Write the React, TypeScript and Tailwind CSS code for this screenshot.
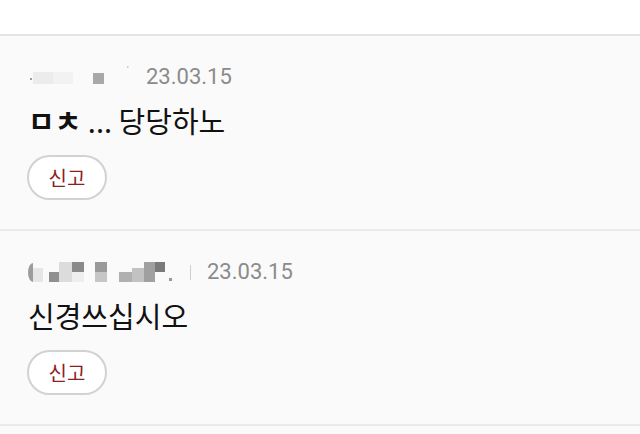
import React from "react";

// Comment list — two replies with blurred nicknames and a report button.

const KR = "font-['Noto_Sans_CJK_KR','Noto_Sans',sans-serif]";

function BlurName1() {
  return (
    <svg width="104" height="28" viewBox="0 0 104 28" className="shrink-0">
      <rect x="3" y="15" width="2" height="2" fill="#9a9a9a" />
      <rect x="6" y="9" width="20" height="12" fill="#ececec" />
      <rect x="26" y="9" width="20" height="12" fill="#f2f2f2" />
      <rect x="66" y="10" width="11" height="11" fill="#a8a8a8" />
      <rect x="100" y="3" width="1.5" height="2" fill="#d0d0d0" />
    </svg>
  );
}

function BlurName2() {
  return (
    <svg width="150" height="28" viewBox="0 0 150 28" className="shrink-0">
      <path d="M6 5 A5 9.5 0 0 0 6 24 Z" fill="#9c9c9c" />
      <rect x="6" y="10" width="10" height="14" fill="#e6e6e6" />
      <rect x="22" y="14" width="10" height="10" fill="#909090" />
      <rect x="32" y="4" width="13" height="20" fill="#dcdcdc" />
      <rect x="45" y="4" width="12" height="10" fill="#8a8a8a" />
      <rect x="45" y="14" width="12" height="10" fill="#eeeeee" />
      <rect x="68" y="4" width="12" height="10" fill="#9a9a9a" />
      <rect x="68" y="14" width="12" height="10" fill="#c6c6c6" />
      <rect x="92" y="14" width="13" height="10" fill="#b0b0b0" />
      <rect x="105" y="10" width="12" height="14" fill="#c2c2c2" />
      <rect x="117" y="4" width="11" height="20" fill="#a0a0a0" />
      <rect x="128" y="4" width="10" height="10" fill="#7a7a7a" />
      <rect x="142" y="20" width="3" height="3" fill="#999999" />
    </svg>
  );
}

function Comment({ name, date, children, sep }: { name: React.ReactNode; date: string; children: React.ReactNode; sep?: boolean }) {
  return (
    <div className="px-[27px] pt-[27px] pb-[29px] border-b-2 border-[#ebebeb]">
      <div className="flex items-center h-[28px]">
        {name}
        {sep ? (
          <>
            <span className="ml-[13px] w-px h-[15px] bg-[#cfcfcf]" />
            <span className="ml-[16px] font-['Roboto',sans-serif] text-[22px] leading-[28px] text-[#8b8b8b]">{date}</span>
          </>
        ) : (
          <span className="ml-[15px] font-['Roboto',sans-serif] text-[22px] leading-[28px] text-[#8b8b8b]">{date}</span>
        )}
      </div>
      <p className={`${KR} mt-[11px] text-[29px] leading-[36px] text-[#111] pl-[1px]`}>{children}</p>
      <button className={`${KR} mt-[17px] w-[80px] h-[45px] rounded-full border-2 border-[#d2d2d2] bg-white text-[20px] text-[#8c1f1f] flex items-center justify-center`}>
        신고
      </button>
    </div>
  );
}

export default function App() {
  return (
    <div className="min-h-screen bg-[#fafafa]">
      <div className="h-[34px] bg-white border-b-2 border-[#e4e4e4] box-content" />
      <Comment name={<BlurName1 />} date="23.03.15">
        <span className="font-bold">ㅁㅊ</span> ... 당당하노
      </Comment>
      <Comment name={<BlurName2 />} date="23.03.15" sep>
        신경쓰십시오
      </Comment>
    </div>
  );
}
